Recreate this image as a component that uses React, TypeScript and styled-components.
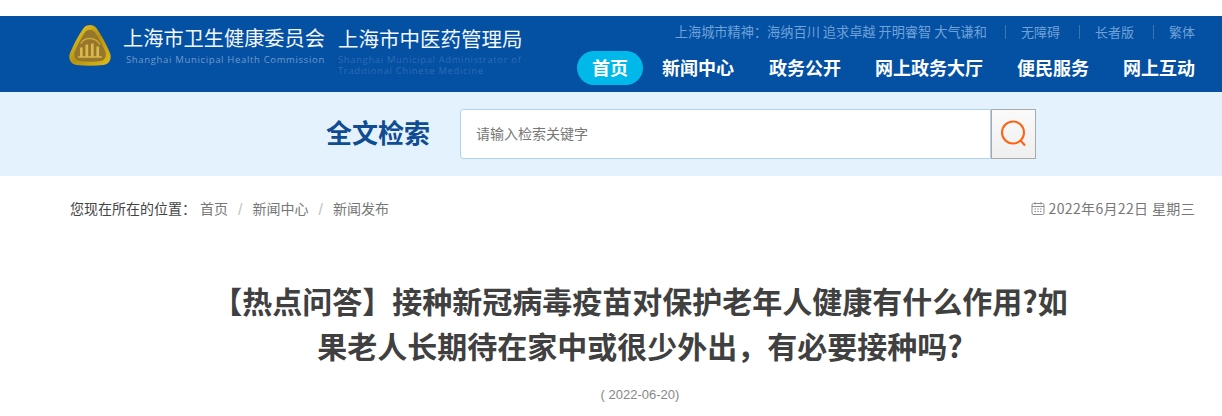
import React from "react";
import styled, { createGlobalStyle } from "styled-components";

const Global = createGlobalStyle`
  html, body { margin: 0; padding: 0; background: #fff; }
  body { font-family: "Liberation Sans", "Noto Sans CJK SC", sans-serif; overflow: hidden; }
`;

const Page = styled.div`
  width: 1222px;
  height: 416px;
  overflow: hidden;
  padding-top: 16px;
  box-sizing: border-box;
`;

const Header = styled.header`
  height: 76px;
  background: #0450a3;
  padding: 0 27px 0 69px;
  display: flex;
  justify-content: space-between;
  box-sizing: border-box;
`;

const Brand = styled.div`
  display: flex;
  align-items: flex-start;
  padding-top: 8px;
`;

const Emblem = styled.svg`
  width: 42px;
  height: 41px;
  flex: none;
  margin: 1px 12px 0 0;
`;

const BrandUnit = styled.div<{ $width: number; $gap: number }>`
  width: ${(p) => p.$width}px;
  margin-right: ${(p) => p.$gap}px;
`;

const BrandName = styled.div<{ $size: number }>`
  font-family: "Noto Sans CJK SC", sans-serif;
  font-size: ${(p) => p.$size}px;
  line-height: 28px;
  color: #f2f7fc;
  white-space: nowrap;
`;

const BrandEnglish = styled.div<{ $dim?: boolean }>`
  font-family: "Open Sans", "Liberation Sans", sans-serif;
  font-size: ${(p) => (p.$dim ? "9.4px" : "9.5px")};
  line-height: 11px;
  letter-spacing: ${(p) => (p.$dim ? "0.69px" : "0.66px")};
  color: ${(p) => (p.$dim ? "#2d6cb3" : "#6f9bcb")};
  margin-top: 2px;
  margin-left: ${(p) => (p.$dim ? "0" : "3px")};
  white-space: nowrap;
`;

const Right = styled.div`
  display: flex;
  flex-direction: column;
  align-items: flex-end;
`;

const TopLinks = styled.div`
  display: flex;
  align-items: center;
  height: 14px;
  margin-top: 9px;
  font-family: "Noto Sans CJK SC", sans-serif;
  font-size: 13px;
  color: #6ea2d8;
`;

const Motto = styled.span`
  margin-right: 18px;
  font-size: 13.2px;
  line-height: 12px;
  white-space: nowrap;
`;

const TopLink = styled.span`
  padding-left: 15px;
  border-left: 1px solid #3a75b6;
  height: 14px;
  line-height: 13px;
  white-space: nowrap;
  & + & {
    margin-left: 19px;
  }
`;

const Nav = styled.nav`
  display: flex;
  align-items: center;
  margin-top: 12px;
`;

const NavItem = styled.a<{ $active?: boolean; $gap?: number }>`
  display: block;
  height: 34px;
  line-height: 33px;
  padding: 0 ${(p) => (p.$active ? "15px" : "0")};
  margin-left: ${(p) => p.$gap ?? 0}px;
  border-radius: 17px;
  background: ${(p) => (p.$active ? "#00b9ea" : "transparent")};
  color: #fff;
  font-family: "Noto Sans CJK SC", sans-serif;
  font-size: 18px;
  font-weight: 700;
  white-space: nowrap;
`;

const SearchBand = styled.section`
  height: 84px;
  background: #e4f2fd;
  display: flex;
  align-items: flex-start;
  padding: 17px 0 0 326px;
  box-sizing: border-box;
`;

const SearchTitle = styled.h2`
  margin: 0 29px 0 0;
  width: 105px;
  height: 50px;
  line-height: 46px;
  color: #0f4c92;
  font-family: "Noto Sans CJK SC", sans-serif;
  font-size: 26px;
  font-weight: 700;
  white-space: nowrap;
`;

const SearchBox = styled.div`
  width: 531px;
  height: 50px;
  background: #fff;
  border: 1px solid #b2d3ef;
  border-radius: 3px 0 0 3px;
  box-sizing: border-box;
  padding-left: 15px;
  line-height: 46px;
  font-family: "Noto Sans CJK SC", sans-serif;
  font-size: 14px;
  color: #777;
`;

const SearchButton = styled.div`
  width: 45px;
  height: 50px;
  box-sizing: border-box;
  border: 1px solid #aaa;
  background: linear-gradient(#fafafa, #efefef);
  display: flex;
  align-items: center;
  justify-content: center;
`;

const Crumbs = styled.div`
  display: flex;
  justify-content: space-between;
  align-items: center;
  height: 20px;
  margin-top: 22px;
  padding: 0 27px 0 70px;
  font-family: "Noto Sans CJK SC", sans-serif;
  font-size: 14px;
  color: #777;
`;

const CrumbTrail = styled.div`
  display: flex;
  align-items: center;
  white-space: nowrap;
`;

const CrumbLabel = styled.span`
  color: #444;
  margin-right: 4px;
`;

const Sep = styled.span`
  color: #c4c4c4;
  font-family: "Liberation Sans", sans-serif;
  font-size: 16px;
  margin: 3px 10px 0;
`;

const DateWrap = styled.div`
  display: flex;
  align-items: center;
  gap: 4px;
  white-space: nowrap;
  letter-spacing: 0.35px;
`;

const Article = styled.article`
  width: 880px;
  margin: 60px 0 0 200px;
  text-align: center;
`;

const Title = styled.h1`
  margin: 0;
  font-family: "Noto Sans CJK SC", sans-serif;
  font-size: 30px;
  line-height: 45px;
  font-weight: 700;
  color: #404040;
`;

const Line = styled.span`
  display: block;
  white-space: nowrap;
`;

const Published = styled.div`
  margin-top: 20px;
  font-size: 13px;
  line-height: 14px;
  color: #888;
`;

function LogoMark() {
  return (
    <Emblem viewBox="0 0 46 42" preserveAspectRatio="none" aria-hidden="true">
      <defs>
        <linearGradient id="gold" x1="0" y1="0" x2="1" y2="1">
          <stop offset="0" stopColor="#f0d32c" />
          <stop offset="0.5" stopColor="#b8920c" />
          <stop offset="1" stopColor="#e0bd18" />
        </linearGradient>
      </defs>
      <path
        d="M16 3C19 -1 27 -1 30 3C36 11 41 20 45 29C47 35 44 40 38 41C28 42 18 42 8 41C2 40 -1 35 1 29C5 20 10 11 16 3Z"
        fill="url(#gold)"
      />
      <path
        d="M18 7C21 4 25 4 28 7C33 14 37 21 40 28C41 33 39 36 35 37C27 38 19 38 11 37C7 36 5 33 6 28C9 21 13 14 18 7Z"
        fill="#96762a"
      />
      <g fill="#d9b94c">
        <rect x="12" y="23" width="3" height="10" />
        <rect x="18" y="20" width="3" height="13" />
        <rect x="24" y="19" width="3" height="14" />
        <rect x="30" y="22" width="3" height="11" />
        <rect x="10" y="32" width="26" height="1.5" />
      </g>
      <path d="M13 19C17 12 29 12 34 20" fill="none" stroke="#c9a93c" strokeWidth="1.5" />
    </Emblem>
  );
}

function SearchIcon() {
  return (
    <svg width="28" height="28" viewBox="0 0 28 28" fill="none" aria-hidden="true">
      <circle cx="13" cy="12.5" r="11" stroke="#ff6212" strokeWidth="2" />
      <path d="M20.5 20.5L25 25.5" stroke="#ff6212" strokeWidth="2" />
    </svg>
  );
}

function CalendarIcon() {
  return (
    <svg width="14" height="14" viewBox="0 0 14 14" fill="none" stroke="#8d8d8d" strokeWidth="1" aria-hidden="true">
      <rect x="1" y="2.5" width="12" height="11" rx="1.5" />
      <path d="M1 5.5H13M4 1V3.5M10 1V3.5M3.5 8H5M6.2 8H7.8M9 8H10.5M3.5 10.5H5M6.2 10.5H7.8M9 10.5H10.5" />
    </svg>
  );
}

const navItems: { label: string; gap: number; active?: boolean }[] = [
  { label: "首页", gap: 0, active: true },
  { label: "新闻中心", gap: 19 },
  { label: "政务公开", gap: 35 },
  { label: "网上政务大厅", gap: 34 },
  { label: "便民服务", gap: 34 },
  { label: "网上互动", gap: 34 },
];

export default function App() {
  return (
    <Page>
      <Global />
      <Header>
        <Brand>
          <LogoMark />
          <BrandUnit $width={203} $gap={12}>
            <BrandName $size={20.2}>上海市卫生健康委员会</BrandName>
            <BrandEnglish>Shanghai Municipal Health Commission</BrandEnglish>
          </BrandUnit>
          <BrandUnit $width={186} $gap={0}>
            <BrandName $size={20.5}>上海市中医药管理局</BrandName>
            <BrandEnglish $dim>
              Shanghai Municipal Administrator of
              <br />
              Traditional Chinese Medicine
            </BrandEnglish>
          </BrandUnit>
        </Brand>
        <Right>
          <TopLinks>
            <Motto>上海城市精神：海纳百川 追求卓越 开明睿智 大气谦和</Motto>
            <TopLink>无障碍</TopLink>
            <TopLink>长者版</TopLink>
            <TopLink>繁体</TopLink>
          </TopLinks>
          <Nav>
            {navItems.map((item) => (
              <NavItem key={item.label} $active={item.active} $gap={item.gap}>
                {item.label}
              </NavItem>
            ))}
          </Nav>
        </Right>
      </Header>
      <SearchBand>
        <SearchTitle>全文检索</SearchTitle>
        <SearchBox>请输入检索关键字</SearchBox>
        <SearchButton>
          <SearchIcon />
        </SearchButton>
      </SearchBand>
      <Crumbs>
        <CrumbTrail>
          <CrumbLabel>您现在所在的位置：</CrumbLabel>
          <span>首页</span>
          <Sep>/</Sep>
          <span>新闻中心</span>
          <Sep>/</Sep>
          <span>新闻发布</span>
        </CrumbTrail>
        <DateWrap>
          <CalendarIcon />
          <span>2022年6月22日 星期三</span>
        </DateWrap>
      </Crumbs>
      <Article>
        <Title>
          <Line>【热点问答】接种新冠病毒疫苗对保护老年人健康有什么作用?如</Line>
          <Line>果老人长期待在家中或很少外出，有必要接种吗?</Line>
        </Title>
        <Published>( 2022-06-20)</Published>
      </Article>
    </Page>
  );
}
